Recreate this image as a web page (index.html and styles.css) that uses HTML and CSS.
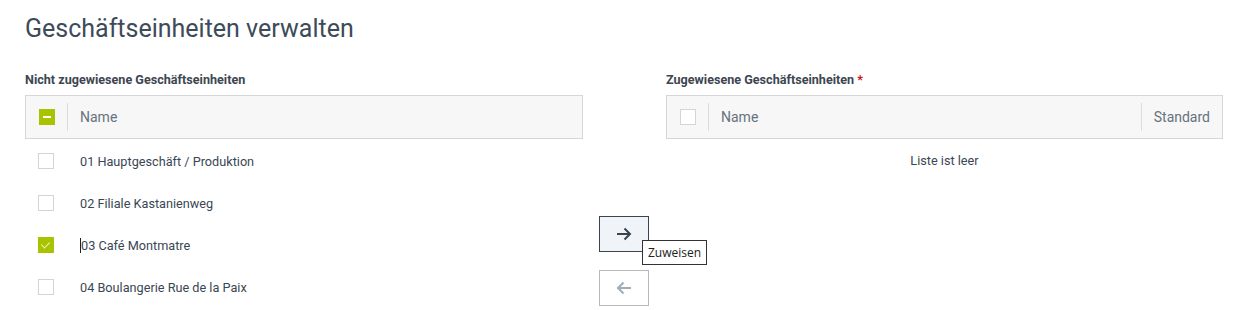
FILE: index.html
```html
<!DOCTYPE html>
<html lang="de">
<head>
  <meta charset="UTF-8" />
  <title>Geschäftseinheiten verwalten</title>
  <link rel="stylesheet" href="styles.css">
</head>
<body>
  <h1>Geschäftseinheiten verwalten</h1>

  <div class="picker">
    <!-- linke Liste -->
    <div class="col">
      <div class="col-label">Nicht zugewiesene Geschäftseinheiten</div>
      <div class="thead">
        <div class="cell-check"><span class="cb partial"></span></div>
        <div class="sep"></div>
        <div class="cell-name">Name</div>
      </div>
      <div class="row">
        <div class="cell-check"><span class="cb"></span></div>
        <div class="cell-name">01 Hauptgeschäft / Produktion</div>
      </div>
      <div class="row">
        <div class="cell-check"><span class="cb"></span></div>
        <div class="cell-name">02 Filiale Kastanienweg</div>
      </div>
      <div class="row">
        <div class="cell-check"><span class="cb checked"></span></div>
        <div class="cell-name"><span class="caret"></span>03 Café Montmatre</div>
      </div>
      <div class="row">
        <div class="cell-check"><span class="cb"></span></div>
        <div class="cell-name">04 Boulangerie Rue de la Paix</div>
      </div>
    </div>

    <!-- Pfeile -->
    <div class="mid">
      <button class="move-btn">
        <svg width="16" height="14" viewBox="0 0 16 14"><path d="M1 7h13M8.5 1.5 14 7l-5.5 5.5" fill="none" stroke="currentColor" stroke-width="2"/></svg>
        <span class="tip">Zuweisen</span>
      </button>
      <button class="move-btn disabled">
        <svg width="16" height="14" viewBox="0 0 16 14"><path d="M15 7H2M7.5 1.5 2 7l5.5 5.5" fill="none" stroke="currentColor" stroke-width="2"/></svg>
      </button>
    </div>

    <!-- rechte Liste -->
    <div class="col">
      <div class="col-label">Zugewiesene Geschäftseinheiten <span class="req">*</span></div>
      <div class="thead">
        <div class="cell-check"><span class="cb"></span></div>
        <div class="sep"></div>
        <div class="cell-name grow">Name</div>
        <div class="sep"></div>
        <div class="cell-std">Standard</div>
      </div>
      <div class="empty">Liste ist leer</div>
    </div>
  </div>
</body>
</html>
```

FILE: styles.css
```css
* { box-sizing: border-box; }
body {
  margin: 0;
  padding: 14px 17px 0 25px;
  font-family: Roboto, "Liberation Sans", sans-serif;
  color: #3a4654;
  background: #fff;
}
h1 {
  margin: 0;
  font-size: 25px;
  font-weight: 400;
  line-height: 30px;
  color: #3d4b59;
}
.picker {
  display: grid;
  grid-template-columns: 558px 83px 557px;
  margin-top: 28px;
}
.col-label {
  font-size: 12.6px;
  font-weight: 700;
  line-height: 16px;
  color: #3d4650;
  margin-bottom: 7px;
}
.req { color: #c0141e; }
.thead {
  display: flex;
  align-items: center;
  height: 44px;
  background: #f7f7f7;
  border: 1px solid #d6d6d6;
  font-size: 14px;
  color: #66727e;
}
.cell-check {
  width: 41px;
  padding-left: 13px;
  display: flex;
  align-items: center;
}
.row .cell-check { width: 42px; }
.sep {
  width: 1px;
  height: 28px;
  background: #dcdcdc;
}
.cell-name { padding-left: 12px; }
.row .cell-name { padding-left: 13px; }
.grow { flex: 1; }
.cell-std { padding: 0 12px 0 12px; }
.list { padding-top: 1px; }
.thead + .row { margin-top: 1px; }
.row {
  display: flex;
  align-items: center;
  height: 42px;
  font-size: 12.7px;
}
.cb {
  display: inline-block;
  width: 16px;
  height: 16px;
  border: 1px solid #d5d5d5;
  background: #fff;
  position: relative;
}
.cb.partial, .cb.checked {
  background: #a9c300;
  border-color: #a9c300;
}
.cb.partial::after {
  content: "";
  position: absolute;
  left: 3px;
  top: 6px;
  width: 8px;
  height: 2px;
  background: #fff;
}
.cb.checked::after {
  content: "";
  position: absolute;
  left: 4px;
  top: 2px;
  width: 4px;
  height: 7px;
  border: solid #eef5c8;
  border-width: 0 1px 1px 0;
  transform: rotate(45deg);
}
.caret {
  display: inline-block;
  width: 1px;
  height: 15px;
  background: #222;
  vertical-align: -3px;
}
.mid {
  display: flex;
  flex-direction: column;
  align-items: center;
  gap: 18px;
  padding-top: 144px;
  padding-right: 1px;
}
.move-btn {
  position: relative;
  width: 50px;
  height: 36px;
  border: 1px solid #3a4450;
  background: #f0f3f7;
  color: #3a4450;
  display: flex;
  align-items: center;
  justify-content: center;
  padding: 0;
  cursor: pointer;
}
.move-btn.disabled {
  border-color: #b4bac0;
  background: #fff;
  color: #a3abb3;
}
.tip {
  position: absolute;
  left: 42px;
  top: 23px;
  padding: 0 5px;
  height: 25px;
  line-height: 23px;
  border: 1px solid #333;
  background: #fff;
  color: #222;
  font-family: "Segoe UI", "Open Sans", sans-serif;
  font-size: 12px;
  white-space: nowrap;
}
.empty {
  height: 42px;
  line-height: 42px;
  margin-top: 1px;
  text-align: center;
  font-size: 12.7px;
}
```
